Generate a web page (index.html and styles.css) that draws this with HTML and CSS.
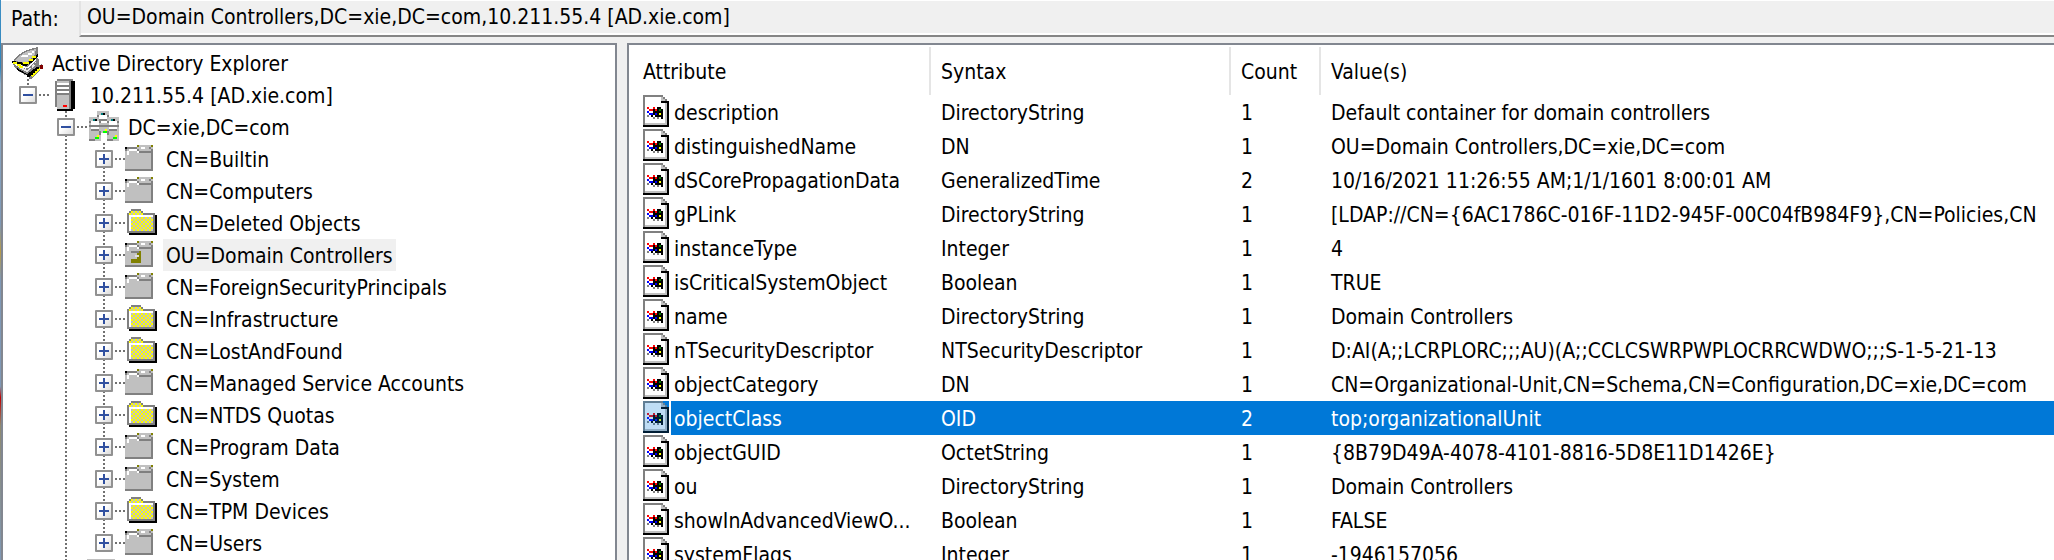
FILE: index.html
```html
<!DOCTYPE html>
<html lang="en">
<head>
<meta charset="utf-8">
<title>Active Directory Explorer</title>
<link rel="stylesheet" href="styles.css">
</head>
<body>
<svg class="sprites" aria-hidden="true">
  <defs>
    <pattern id="checker" width="2" height="2" patternUnits="userSpaceOnUse">
      <path fill="#ffff00" d="M0 0h2v2H0z"/><path fill="#c0c0c0" d="M0 0h1v1H0zM1 1h1v1H1z"/>
    </pattern>
    <symbol id="book" viewBox="0 0 32 32">
      <path fill="#808080" d="M0 16l3-3 3-4 6-4 7-3 8-2v4l-1 7 2 1v6l3-1v3l-3 5-8 7h-2v-3l-4-1-8-5-3-4-1-3z"/>
      <path fill="#c0c0c0" d="M4 14l3-4 6-4 7-3 5-1-1 5-7 7-2 2z"/>
      <path fill="#fff" d="M9 10h8V8h4V6h2V4h-2v2h-4v2h-5z"/>
      <path fill="#000" d="M1 14h4v1l11 1 4-3 7-6v2l-7 7-5 3-12-2-2-1zM6 21l10 6 10-7v2l-8 8h-2v-2l-10-5z"/>
      <path fill="#e8e8e8" d="M7 19l9 4 9-8v3l-9 7-8-4z"/>
      <path fill="#fff" d="M2 16l14 4 9-8v2l-9 8-10-3z"/>
      <path fill="#ff0" d="M2 15h4v2H2zM6 17h4v2H6zM8 19h4v2H8zM12 15h6v2h-6zM18 12h4v2h-4zM21 9h4v2h-4z"/>
      <path fill="#808080" d="M15 21h2v2h-2zM19 19h2v2h-2zM23 16h2v2h-2z"/>
      <path fill="#ff0" d="M28 21l2 1-9 8-1-2z"/>
      <path fill="#000" d="M26 20h2v2h-2v2h-2v2h-2v2h-2v-2l2-2z"/>
      <path fill="#800000" d="M29 18h3v4h-3z"/>
    </symbol>
    <symbol id="server" viewBox="0 0 16 16">
      <path fill="#000" d="M11 1h2v14h-1v1H4v-1h7z"/>
      <path fill="#808080" d="M4 0h8v1h-1v14H4v-1H3V1h1z"/>
      <path fill="#c0c0c0" d="M4 1h6v14H4z"/>
      <path fill="#fff" d="M4 2h6v1H4zM4 4h6v1H4zM4 6h6v1H4z"/>
      <path fill="#808080" d="M4 3h6v1H4zM4 5h6v1H4zM4 7h6v1H4z"/>
      <path fill="#000" d="M11 3h1v1h-1zM11 5h1v1h-1zM11 7h1v1h-1z"/>
      <path fill="#f00" d="M7 13h2v1H7z"/>
    </symbol>
    <symbol id="domain" viewBox="0 0 16 16">
      <path fill="#c0c0c0" d="M5 0h6v11H5zM1 3h6v12H1zM10 3h6v12h-6z"/>
      <path fill="#808080" d="M5 2h1v1H5zM10 2h1v1h-1zM6 4h4v1H6zM7 7h3v1H7zM1 5h1v1H1zM6 5h1v1H6zM10 5h1v1h-1zM15 5h1v1h-1zM1 7h6v1H1zM10 7h6v1h-6zM2 9h4v1H2zM11 9h4v1h-4zM1 14h3v1H1zM10 14h3v1h-3zM6 10h1v2H6zM10 10h1v2h-1z"/>
      <path fill="#fff" d="M6 2h4v2H6zM2 5h4v2H2zM11 5h4v2h-4zM2 8h4v1H2zM11 8h4v1h-4zM7 5h3v1H7z"/>
      <path fill="#000" d="M8 1h1v1H8zM4 4h1v1H4zM13 4h1v1h-1z"/>
      <path fill="#008080" d="M7 1h1v1H7zM3 4h1v1H3zM12 4h1v1h-1z"/>
      <path fill="#0f0" d="M8 10h2v1H8zM4 13h2v1H4zM13 13h2v1h-2z"/>
      <path fill="#ff0" d="M9 9h1v1H9zM5 12h1v1H5zM14 12h1v1h-1z"/>
    </symbol>
    <symbol id="folder-grey" viewBox="0 0 16 16">
      <path fill="#c0c0c0" d="M0 3h14v11H0zM6 1h8v2H6z"/>
      <path fill="#808080" d="M1 2h5v1H1zM0 3h1v1H0zM6 3h1v1H6zM7 4h7v1H7zM13 3h1v11h-1zM0 13h14v1H0zM12 2h1v1h-1z"/>
      <path fill="#fff" d="M1 4h1v2H1zM2 3h4v1H2zM6 4h1v1H6zM8 2h2v1H8z"/>
      <path fill="#000" d="M0 2h1v1H0z"/>
      <path fill="#808000" d="M6 1h1v1H6zM13 1h1v1h-1z"/>
    </symbol>
    <symbol id="folder-unit" viewBox="0 0 16 16">
      <use href="#folder-grey"/>
      <path fill="#808080" d="M3 6h5v1H3z"/>
      <path fill="#808000" d="M7 6h1v6H3v-2h3V7h1z"/>
      <path fill="#e0e0e0" d="M5 8h2v1H5z"/>
    </symbol>
    <symbol id="folder-yellow" viewBox="0 0 16 16">
      <path fill="#000" d="M15 4h1v10H2v-1h13z"/>
      <path fill="#808080" d="M3 1h5v1h1v1h6v10H1V3h1V2h1z"/>
      <path fill="#fff" d="M2 4h12v8H2z"/>
      <path fill="url(#checker)" d="M3 2h5v1h1v1H2V3h1zM3 5h11v7H3z"/>
    </symbol>
    <symbol id="folder-shared" viewBox="0 0 16 16">
      <path fill="#c0c0c0" d="M0 0h14v14H0z"/>
    </symbol>
    <symbol id="attribute" viewBox="0 0 13 16">
      <path fill="#fff" d="M1 1h9v2h2v12H1z"/>
      <path fill="#808080" d="M0 0h10v1H1v14H0zM10 1h1v1h-1zM11 2h1v1h-1z"/>
      <path fill="#c0c0c0" d="M9 1h1v1h1v1H9zM11 4h1v11H1v-1h10z"/>
      <path fill="#000" d="M9 3h4v13H0v-1h12V4H9z"/>
      <path fill="#000" d="M7 6h2v1h1v5H9v-1H6v-1H5v1H4v-1H3v-1h1V9h1V8H4V7h3z"/>
      <path fill="#f00" d="M2 6h1v1H2zM3 7h2v1H3zM6 7h1v1H6zM5 6h1v1H5z"/>
      <path fill="#008000" d="M8 7h1v1H8z"/>
      <path fill="#00f" d="M2 8h1v1H2zM3 9h2v1H3zM6 9h1v1H6z"/>
      <path fill="#ff0" d="M8 9h1v1H8z"/>
      <path fill="#808080" d="M5 11h1v1H5zM7 11h1v1H7zM2 10h1v1H2z"/>
    </symbol>
  </defs>
</svg>

<div class="app">
  <div class="desktop-edge"></div>
  <header class="path-bar">
    <label class="path-label" for="path">Path:</label>
    <input class="path-field" id="path" type="text" readonly value="OU=Domain Controllers,DC=xie,DC=com,10.211.55.4 [AD.xie.com]">
  </header>

  <main class="panes">
    <nav class="pane tree" aria-label="Directory tree">
      <div class="node"><svg class="icon"><use href="#book"/></svg><span class="label">Active Directory Explorer</span></div>
      <div class="node"><span class="cell line-top"><button class="toggle minus" aria-label="Collapse"></button></span><svg class="icon"><use href="#server"/></svg><span class="label">10.211.55.4 [AD.xie.com]</span></div>
      <div class="node"><span class="cell"></span><span class="cell line"><button class="toggle minus" aria-label="Collapse"></button></span><svg class="icon"><use href="#domain"/></svg><span class="label">DC=xie,DC=com</span></div>
      <div class="node"><span class="cell"></span><span class="cell line"></span><span class="cell line"><button class="toggle" aria-label="Expand"></button></span><svg class="icon"><use href="#folder-grey"/></svg><span class="label">CN=Builtin</span></div>
      <div class="node"><span class="cell"></span><span class="cell line"></span><span class="cell line"><button class="toggle" aria-label="Expand"></button></span><svg class="icon"><use href="#folder-grey"/></svg><span class="label">CN=Computers</span></div>
      <div class="node"><span class="cell"></span><span class="cell line"></span><span class="cell line"><button class="toggle" aria-label="Expand"></button></span><svg class="icon"><use href="#folder-yellow"/></svg><span class="label">CN=Deleted Objects</span></div>
      <div class="node"><span class="cell"></span><span class="cell line"></span><span class="cell line"><button class="toggle" aria-label="Expand"></button></span><svg class="icon"><use href="#folder-unit"/></svg><span class="label current">OU=Domain Controllers</span></div>
      <div class="node"><span class="cell"></span><span class="cell line"></span><span class="cell line"><button class="toggle" aria-label="Expand"></button></span><svg class="icon"><use href="#folder-grey"/></svg><span class="label">CN=ForeignSecurityPrincipals</span></div>
      <div class="node"><span class="cell"></span><span class="cell line"></span><span class="cell line"><button class="toggle" aria-label="Expand"></button></span><svg class="icon"><use href="#folder-yellow"/></svg><span class="label">CN=Infrastructure</span></div>
      <div class="node"><span class="cell"></span><span class="cell line"></span><span class="cell line"><button class="toggle" aria-label="Expand"></button></span><svg class="icon"><use href="#folder-yellow"/></svg><span class="label">CN=LostAndFound</span></div>
      <div class="node"><span class="cell"></span><span class="cell line"></span><span class="cell line"><button class="toggle" aria-label="Expand"></button></span><svg class="icon"><use href="#folder-grey"/></svg><span class="label">CN=Managed Service Accounts</span></div>
      <div class="node"><span class="cell"></span><span class="cell line"></span><span class="cell line"><button class="toggle" aria-label="Expand"></button></span><svg class="icon"><use href="#folder-yellow"/></svg><span class="label">CN=NTDS Quotas</span></div>
      <div class="node"><span class="cell"></span><span class="cell line"></span><span class="cell line"><button class="toggle" aria-label="Expand"></button></span><svg class="icon"><use href="#folder-grey"/></svg><span class="label">CN=Program Data</span></div>
      <div class="node"><span class="cell"></span><span class="cell line"></span><span class="cell line"><button class="toggle" aria-label="Expand"></button></span><svg class="icon"><use href="#folder-grey"/></svg><span class="label">CN=System</span></div>
      <div class="node"><span class="cell"></span><span class="cell line"></span><span class="cell line"><button class="toggle" aria-label="Expand"></button></span><svg class="icon"><use href="#folder-yellow"/></svg><span class="label">CN=TPM Devices</span></div>
      <div class="node"><span class="cell"></span><span class="cell line"></span><span class="cell line-top"><button class="toggle" aria-label="Expand"></button></span><svg class="icon"><use href="#folder-grey"/></svg><span class="label">CN=Users</span></div>
      <div class="node"><span class="cell"></span><span class="cell line"></span><svg class="icon"><use href="#folder-shared"/></svg></div>
    </nav>

    <section class="pane list">
      <table class="attributes">
        <colgroup><col class="col-name"><col class="col-syntax"><col class="col-count"><col></colgroup>
        <thead>
          <tr><th>Attribute</th><th>Syntax</th><th>Count</th><th>Value(s)</th></tr>
        </thead>
        <tbody>
          <tr><td><div class="name"><svg class="doc"><use href="#attribute"/></svg><span>description</span></div></td><td>DirectoryString</td><td>1</td><td>Default container for domain controllers</td></tr>
          <tr><td><div class="name"><svg class="doc"><use href="#attribute"/></svg><span>distinguishedName</span></div></td><td>DN</td><td>1</td><td>OU=Domain Controllers,DC=xie,DC=com</td></tr>
          <tr><td><div class="name"><svg class="doc"><use href="#attribute"/></svg><span>dSCorePropagationData</span></div></td><td>GeneralizedTime</td><td>2</td><td>10/16/2021 11:26:55 AM;1/1/1601 8:00:01 AM</td></tr>
          <tr><td><div class="name"><svg class="doc"><use href="#attribute"/></svg><span>gPLink</span></div></td><td>DirectoryString</td><td>1</td><td>[LDAP://CN={6AC1786C-016F-11D2-945F-00C04fB984F9},CN=Policies,CN</td></tr>
          <tr><td><div class="name"><svg class="doc"><use href="#attribute"/></svg><span>instanceType</span></div></td><td>Integer</td><td>1</td><td>4</td></tr>
          <tr><td><div class="name"><svg class="doc"><use href="#attribute"/></svg><span>isCriticalSystemObject</span></div></td><td>Boolean</td><td>1</td><td>TRUE</td></tr>
          <tr><td><div class="name"><svg class="doc"><use href="#attribute"/></svg><span>name</span></div></td><td>DirectoryString</td><td>1</td><td>Domain Controllers</td></tr>
          <tr><td><div class="name"><svg class="doc"><use href="#attribute"/></svg><span>nTSecurityDescriptor</span></div></td><td>NTSecurityDescriptor</td><td>1</td><td>D:AI(A;;LCRPLORC;;;AU)(A;;CCLCSWRPWPLOCRRCWDWO;;;S-1-5-21-13</td></tr>
          <tr><td><div class="name"><svg class="doc"><use href="#attribute"/></svg><span>objectCategory</span></div></td><td>DN</td><td>1</td><td>CN=Organizational-Unit,CN=Schema,CN=Configuration,DC=xie,DC=com</td></tr>
          <tr class="selected"><td><div class="name"><svg class="doc"><use href="#attribute"/></svg><span>objectClass</span></div></td><td>OID</td><td>2</td><td>top;organizationalUnit</td></tr>
          <tr><td><div class="name"><svg class="doc"><use href="#attribute"/></svg><span>objectGUID</span></div></td><td>OctetString</td><td>1</td><td>{8B79D49A-4078-4101-8816-5D8E11D1426E}</td></tr>
          <tr><td><div class="name"><svg class="doc"><use href="#attribute"/></svg><span>ou</span></div></td><td>DirectoryString</td><td>1</td><td>Domain Controllers</td></tr>
          <tr><td><div class="name"><svg class="doc"><use href="#attribute"/></svg><span>showInAdvancedViewO...</span></div></td><td>Boolean</td><td>1</td><td>FALSE</td></tr>
          <tr><td><div class="name"><svg class="doc"><use href="#attribute"/></svg><span>systemFlags</span></div></td><td>Integer</td><td>1</td><td>-1946157056</td></tr>
        </tbody>
      </table>
    </section>
  </main>
</div>
</body>
</html>
```

FILE: styles.css
```css
* {
  box-sizing: border-box;
}

body {
  margin: 0;
  overflow: hidden;
  background: #f0f0f0;
  color: #000;
  font-family: "DejaVu Sans Condensed", Tahoma, "Noto Sans", sans-serif;
  font-size: 21px;
}

.sprites {
  display: block;
  width: 0;
  height: 0;
}

.app {
  display: grid;
  grid-template-columns: 1px minmax(0, 1fr);
  grid-template-rows: auto minmax(0, 1fr);
  height: 100vh;
}

.desktop-edge {
  grid-row: 1 / 3;
  background: linear-gradient(#3f8fc4 0, #2f86bd 12%, #8fb0cc 15%, #7f98b5 40%, #b59a4a 45%, #7f98b5 50%, #7f98b5 69%, #c00000 71%, #8f8a70 76%, #7f98b5 100%);
}

.path-bar {
  display: flex;
  align-items: flex-start;
  height: 43px;
  border-top: 1px solid #fff;
}

.path-label {
  width: 78px;
  padding-left: 10px;
  line-height: 37px;
}

.path-field {
  flex: 1;
  min-width: 0;
  height: 36px;
  padding: 0 0 2px 6px;
  border: 0;
  border-left: 2px solid #e3e3e3;
  border-bottom: 2px solid #868686;
  background: #f0f0f0;
  box-shadow: inset 0 -2px #fff;
  color: inherit;
  font: inherit;
}

.panes {
  display: grid;
  grid-template-columns: 616px minmax(0, 1fr);
  column-gap: 10px;
}

.pane {
  overflow: hidden;
  padding-top: 2px;
  border: 2px solid #828790;
  border-bottom: 0;
  background: #fff;
}

.tree {
  padding-left: 8px;
}

.node {
  display: flex;
  height: 32px;
}

.cell {
  display: flex;
  flex: none;
  align-items: center;
  width: 38px;
  padding-left: 8px;
}

.line {
  background: repeating-linear-gradient(#707070 0 2px, transparent 2px 4px) 16px 0 / 2px 100% no-repeat;
}

.line-top {
  background: repeating-linear-gradient(#707070 0 2px, transparent 2px 4px) 16px 0 / 2px 16px no-repeat;
}

.cell:has(.toggle)::after {
  content: "";
  width: 10px;
  height: 2px;
  margin-left: 2px;
  background: repeating-linear-gradient(90deg, #707070 0 2px, transparent 2px 4px);
}

.toggle {
  flex: none;
  width: 18px;
  height: 18px;
  padding: 0;
  border: 2px solid #919191;
  border-radius: 1px;
  background:
    linear-gradient(#3050a0, #3050a0) center / 10px 2px no-repeat,
    linear-gradient(#3050a0, #3050a0) center / 2px 10px no-repeat,
    linear-gradient(135deg, #fff 40%, #dcdcdc);
}

.toggle.minus {
  background:
    linear-gradient(#3050a0, #3050a0) center / 10px 2px no-repeat,
    linear-gradient(135deg, #fff 40%, #dcdcdc);
}

.icon {
  flex: none;
  width: 32px;
  height: 32px;
  margin-right: 6px;
  shape-rendering: crispEdges;
}

.label {
  padding: 0 3px;
  line-height: 34px;
  white-space: nowrap;
}

.current {
  background: #f0f0f0;
}

.list {
  padding-left: 2px;
  border-right: 0;
}

.attributes {
  width: 100%;
  table-layout: fixed;
  border-collapse: collapse;
}

.col-name,
.col-syntax {
  width: 300px;
}

.col-count {
  width: 90px;
}

th,
td {
  overflow: hidden;
  padding: 0 0 0 12px;
  text-align: left;
  font-weight: normal;
  white-space: nowrap;
}

th + th,
td + td {
  padding-left: 10px;
}

th {
  height: 48px;
  padding-top: 2px;
  background: linear-gradient(#e5e5e5, #e5e5e5) right / 2px 100% no-repeat;
}

th:last-child {
  background: none;
}

td {
  height: 34px;
  line-height: 34px;
}

td + td {
  padding-top: 2px;
  line-height: 32px;
}

.name {
  display: flex;
  gap: 2px;
}

.name span {
  flex: 1;
  padding: 2px 0 0 3px;
  line-height: 32px;
}

.doc {
  flex: none;
  width: 26px;
  height: 32px;
  shape-rendering: crispEdges;
}

.selected {
  color: #fff;
}

.selected .name span,
.selected td + td {
  background: #0078d7;
}

.selected .doc {
  background: #0078d7;
}

.selected .doc use {
  opacity: 0.75;
}
```
